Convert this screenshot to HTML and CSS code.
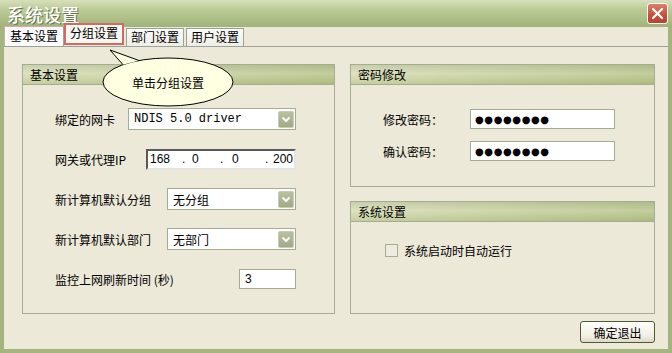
FILE: index.html
```html
<!DOCTYPE html>
<html>
<head>
  <title>系统设置</title>
  <link rel="stylesheet" href="styles.css">
</head>
<body>
  <div class="window">
    <!-- 标题栏 -->
    <div class="titlebar">
      <span class="title">系统设置</span>
      <span class="close">
        <svg width="19" height="19" viewBox="0 0 19 19">
          <path d="M5 5 L14 14 M14 5 L5 14" stroke="#fff" stroke-width="2.2" stroke-linecap="round"/>
        </svg>
      </span>
    </div>

    <div class="frame">
      <!-- 选项卡 -->
      <div class="tabs">
        <div class="tab active">基本设置</div>
        <div class="tab marked">分组设置</div>
        <div class="tab">部门设置</div>
        <div class="tab">用户设置</div>
      </div>

      <div class="panel">
        <!-- 左侧：基本设置 -->
        <div class="group group-main">
          <div class="group-head">基本设置</div>
          <div class="group-body rows">
            <div class="row">
              <span class="label">绑定的网卡</span>
              <div class="select select-nic">
                <span class="select-text mono">NDIS 5.0 driver</span>
                <span class="drop">
                  <svg width="16" height="17" viewBox="0 0 16 17"><path d="M4.5 6.5 L8 10 L11.5 6.5" stroke="#fff" stroke-width="2" fill="none"/></svg>
                </span>
              </div>
            </div>
            <div class="row">
              <span class="label">网关或代理IP</span>
              <div class="ip">
                <span class="ip-part p1">168</span><span class="ip-dot d1">.</span>
                <span class="ip-part p2">0</span><span class="ip-dot d2">.</span>
                <span class="ip-part p3">0</span><span class="ip-dot d3">.</span>
                <span class="ip-part p4">200</span>
              </div>
            </div>
            <div class="row">
              <span class="label">新计算机默认分组</span>
              <div class="select select-short">
                <span class="select-text">无分组</span>
                <span class="drop">
                  <svg width="16" height="17" viewBox="0 0 16 17"><path d="M4.5 6.5 L8 10 L11.5 6.5" stroke="#fff" stroke-width="2" fill="none"/></svg>
                </span>
              </div>
            </div>
            <div class="row">
              <span class="label">新计算机默认部门</span>
              <div class="select select-short">
                <span class="select-text">无部门</span>
                <span class="drop">
                  <svg width="16" height="17" viewBox="0 0 16 17"><path d="M4.5 6.5 L8 10 L11.5 6.5" stroke="#fff" stroke-width="2" fill="none"/></svg>
                </span>
              </div>
            </div>
            <div class="row">
              <span class="label">监控上网刷新时间 (秒)</span>
              <div class="field field-time">3</div>
            </div>
          </div>
        </div>

        <!-- 右侧 -->
        <div class="side">
          <div class="group group-pwd">
            <div class="group-head">密码修改</div>
            <div class="group-body pwd-rows">
              <div class="pwd-row">
                <span class="pwd-label">修改密码：</span>
                <div class="field field-pwd">●●●●●●●●</div>
              </div>
              <div class="pwd-row">
                <span class="pwd-label">确认密码：</span>
                <div class="field field-pwd">●●●●●●●●</div>
              </div>
            </div>
          </div>

          <div class="group group-sys">
            <div class="group-head">系统设置</div>
            <div class="group-body sys-body">
              <label class="check-row">
                <span class="checkbox"></span>
                <span>系统启动时自动运行</span>
              </label>
            </div>
          </div>

          <div class="buttons">
            <button class="btn">确定退出</button>
          </div>
        </div>
      </div>
    </div>

    <!-- 提示气泡 -->
    <div class="balloon">
      <svg width="150" height="70" viewBox="0 0 150 70">
        <ellipse cx="73" cy="37" rx="65" ry="24" fill="#ffffe1" stroke="#000" stroke-width="1"/>
        <path d="M28 19.7 L15 5 L44 15.5" fill="#ffffe1" stroke="#000" stroke-width="1"/>
        <text x="73" y="43" text-anchor="middle" class="balloon-text">单击分组设置</text>
      </svg>
    </div>
  </div>
</body>
</html>
```

FILE: styles.css
```css
/* общие */
body {
  margin: 0;
  font-family: "Noto Sans CJK SC", "Liberation Sans", sans-serif;
  font-size: 12px;
  color: #000;
}

.window {
  position: relative;
  width: 672px;
  height: 353px;
  background-color: #ece9d8;
  display: flex;
  flex-direction: column;
  overflow: hidden;
}

/* заголовок окна */
.titlebar {
  height: 27px;
  flex: none;
  box-sizing: border-box;
  display: flex;
  align-items: center;
  justify-content: space-between;
  padding: 0 4px 0 7px;
  background: linear-gradient(#d8e0bb, #bccb98 35%, #abbc85 75%, #a0b37b);
}

.title {
  color: #fff;
  font-size: 18px;
  line-height: 1;
  font-weight: 500;
  text-shadow: 1px 1px 0 #66764a;
}

.close {
  width: 21px;
  height: 21px;
  box-sizing: border-box;
  border: 1px solid #fff;
  border-radius: 3px;
  background: linear-gradient(#dd8068, #c4503a 60%, #b8442f);
  display: flex;
}

.frame {
  flex: 1;
  display: flex;
  flex-direction: column;
  border: 4px solid #a3b47f;
  border-top: none;
}

/* вкладки */
.tabs {
  height: 19px;
  flex: none;
  display: flex;
  align-items: flex-end;
}

.tab {
  height: 17px;
  line-height: 16px;
  padding: 0 4px;
  margin-right: 2px;
  border: 1px solid #9aa29a;
  border-bottom: none;
  background: linear-gradient(#fbfbf9, #eeede6);
}

.tab.active {
  height: 19px;
  line-height: 18px;
  padding: 0 5px;
  margin-right: 0;
  background: #fcfcfe;
  border-color: #d9a9a3 #9aa29a #9aa29a #d9a9a3;
}

.tab.marked {
  height: 18px;
  line-height: 15px;
  padding: 0 4px;
  border: 2px solid #cf6b62;
  margin-bottom: 1px;
  background: #f7f6f1;
}

.panel {
  flex: 1;
  display: flex;
  gap: 15px;
  padding: 17px 0 0 18px;
  border-top: 1px solid #9aa29a;
  background-color: #ece9d8;
}

/* группы */
.group {
  box-sizing: border-box;
  border: 1px solid #a5ac92;
}

.group-head {
  height: 19px;
  line-height: 19px;
  padding-left: 7px;
  border-bottom: 1px solid #a5ac92;
  background:
    linear-gradient(to right, rgba(236, 236, 210, 0.35), rgba(160, 178, 110, 0.35)),
    linear-gradient(#b7c09a, #d5dcb5 45%, #c3cd9c 75%, #b1bf86);
}

.group-main {
  width: 313px;
  height: 250px;
}

.rows {
  padding: 14px 38px 0 32px;
}

.row {
  height: 40px;
  display: flex;
  align-items: center;
  justify-content: space-between;
}

.side {
  width: 305px;
  display: flex;
  flex-direction: column;
}

.group-pwd {
  height: 123px;
}

.group-sys {
  height: 113px;
  margin-top: 14px;
}

/* поля ввода */
.select {
  height: 22px;
  box-sizing: border-box;
  border: 1px solid #a5ac92;
  background: #fff;
  display: flex;
  align-items: center;
  justify-content: space-between;
  padding: 0 1px 0 5px;
}

.select-nic {
  width: 168px;
}

.select-short {
  width: 129px;
}

.select-text.mono {
  font-family: "Liberation Mono", monospace;
  font-size: 12px;
}

.drop {
  width: 16px;
  height: 17px;
  border-radius: 2px;
  border: 1px solid #c8ccb8;
  box-sizing: border-box;
  background: linear-gradient(#b9c0a0, #a1a985);
  display: flex;
  align-items: center;
  justify-content: center;
}

.drop svg {
  flex: none;
}

.ip {
  width: 150px;
  height: 21px;
  box-sizing: border-box;
  border: 2px solid;
  border-color: #5a5a5a #e4e4e4 #e4e4e4 #5a5a5a;
  background: #fff;
  display: flex;
  align-items: center;
  padding-left: 2px;
  font-family: "Liberation Sans", sans-serif;
  font-size: 12px;
}

.ip-part.p1 { width: 32px; }
.ip-dot.d1 { width: 10px; }
.ip-part.p2 { width: 28px; }
.ip-dot.d2 { width: 12px; }
.ip-part.p3 { width: 33px; }
.ip-dot.d3 { width: 8px; }

.ip-part.p4 {
  width: 19px;
  text-align: right;
}

.field {
  height: 20px;
  box-sizing: border-box;
  border: 1px solid #a5ac92;
  background: #fff;
  display: flex;
  align-items: center;
  padding-left: 5px;
}

.field-time {
  width: 57px;
  font-family: "Liberation Sans", sans-serif;
}

.pwd-rows {
  padding: 18px 0 0 32px;
}

.pwd-row {
  height: 32px;
  display: flex;
  align-items: center;
}

.pwd-label {
  width: 87px;
}

.field-pwd {
  width: 145px;
  padding-left: 4px;
  font-family: "DejaVu Sans", sans-serif;
  font-size: 10px;
  letter-spacing: 0.6px;
}

.sys-body {
  padding: 18px 0 0 34px;
}

.check-row {
  display: flex;
  align-items: center;
  gap: 6px;
  height: 20px;
}

.checkbox {
  width: 13px;
  height: 13px;
  box-sizing: border-box;
  border: 1px solid #a5ac92;
  background: #eeece1;
}

.buttons {
  display: flex;
  justify-content: flex-end;
  margin-top: 7px;
}

.btn {
  width: 75px;
  height: 22px;
  border: 1px solid #4e5c34;
  border-radius: 3px;
  background: linear-gradient(#fefefb, #f1efe3 70%, #dcd9c8);
  font-family: "Noto Sans CJK SC", sans-serif;
  font-size: 12px;
  padding: 0;
  color: #000;
}

/* всплывающая подсказка */
.balloon {
  position: absolute;
  left: 95px;
  top: 45px;
}

.balloon svg {
  display: block;
}

.balloon-text {
  font-family: "Noto Sans CJK SC", sans-serif;
  font-size: 12px;
}
```
